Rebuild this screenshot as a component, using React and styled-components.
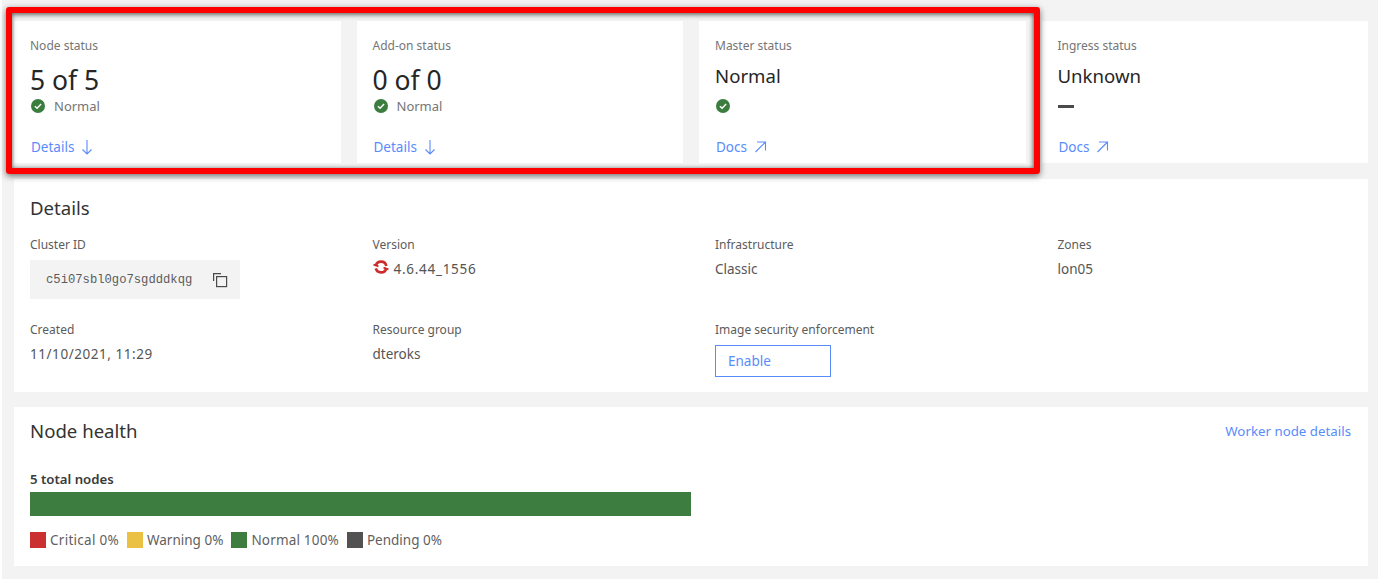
import React from "react";
import styled, { createGlobalStyle } from "styled-components";

const Global = createGlobalStyle`
  html, body { margin: 0; padding: 0; background: #fff; }
  body { font-family: "Noto Sans", "Open Sans", sans-serif; color: #393939; }
`;
const Page = styled.div`
  position: relative;
  width: 1376px;
  height: 579px;
  margin-left: 2px;
  box-sizing: border-box;
  background: #f3f3f3;
  padding: 21px 10px 0 12px;
  display: flex;
  flex-direction: column;
`;
const CardRow = styled.div`
  display: grid;
  grid-template-columns: repeat(4, 1fr);
  gap: 16px;
`;
const Card = styled.div`
  background: #fff;
  height: 142px;
  box-sizing: border-box;
  padding: 16px 16px 6px;
  display: flex;
  flex-direction: column;
`;
const Label = styled.div`
  font-size: 12px;
  line-height: 18px;
  color: ${(p) => p.$color || "#757575"};
  white-space: nowrap;
`;
const Value = styled.div`
  height: 36px;
  margin-top: 7px;
  font-size: ${(p) => (p.$big ? "26.5px" : "18.6px")};
  line-height: ${(p) => (p.$big ? "36px" : "28px")};
  color: #262626;
  white-space: nowrap;
`;
const Status = styled.div`
  display: flex;
  align-items: center;
  height: 16px;
  gap: 8px;
  font-size: 13px;
  color: #757575;
`;
const Dash = styled.span`
  width: 16px;
  height: 3px;
  background: #4a4a4a;
`;
const CardLink = styled.a`
  margin-top: auto;
  height: 20px;
  display: flex;
  align-items: center;
  gap: 5px;
  padding-left: 1px;
  font-size: 13.5px;
  color: #5a8bfb;
`;
const Section = styled.section`
  background: #fff;
  margin-top: ${(p) => p.$top}px;
  height: ${(p) => p.$height}px;
  box-sizing: border-box;
`;
const Heading = styled.h2`
  margin: 0;
  font-size: 18.6px;
  line-height: 28px;
  font-weight: 400;
  color: #333;
`;
const DetailsHead = styled.div`
  padding: 15px 16px 0;
`;
const DetailGrid = styled.div`
  display: grid;
  grid-template-columns: repeat(4, 1fr);
  grid-template-rows: 85px auto;
  column-gap: 16px;
  margin-top: 14px;
`;
const Cell = styled.div`
  padding-left: 16px;
`;
const CellValue = styled.div`
  display: flex;
  align-items: center;
  gap: 5px;
  margin-top: 6px;
  font-size: 13.5px;
  line-height: 18px;
  color: #555;
  letter-spacing: ${(p) => p.$tracking || 0}px;
`;
const CodeBox = styled.div`
  margin-top: 6px;
  width: 210px;
  height: 39px;
  box-sizing: border-box;
  background: #f3f3f3;
  padding: 0 12px 0 16px;
  display: flex;
  align-items: center;
  justify-content: space-between;
  font-family: "Liberation Mono", monospace;
  font-size: 12.2px;
  color: #5c5c5c;
`;
const EnableButton = styled.button`
  display: block;
  margin-top: 6px;
  width: 116px;
  height: 32px;
  box-sizing: border-box;
  border: 1.5px solid #5a8bfb;
  background: #fff;
  padding: 0 0 0 12px;
  text-align: left;
  font-family: inherit;
  font-size: 13.5px;
  color: #5a8bfb;
`;
const HealthHead = styled.div`
  display: flex;
  justify-content: space-between;
  align-items: center;
  padding: 10px 17px 0 16px;
`;
const WorkerLink = styled.a`
  font-size: 13.3px;
  color: #5a8bfb;
`;
const Total = styled.div`
  margin: 25px 16px 0;
  font-size: 13.2px;
  line-height: 18px;
  font-weight: 600;
  color: #3a3a3a;
`;
const Bar = styled.div`
  margin: 4px 16px 0;
  width: 661px;
  height: 24px;
  background: #3d7d40;
`;
const Legend = styled.div`
  display: flex;
  gap: 8px;
  margin: 16px 16px 0;
`;
const LegendItem = styled.div`
  display: flex;
  align-items: center;
  gap: 4px;
  font-size: 13.5px;
  line-height: 16px;
  letter-spacing: ${(p) => p.$tracking}px;
  color: #5f5f5f;
  white-space: nowrap;
`;
const Swatch = styled.span`
  width: 16px;
  height: 16px;
  background: ${(p) => p.$color};
`;
const Highlight = styled.div`
  position: absolute;
  left: 4px;
  top: 7px;
  width: 1034px;
  height: 167px;
  box-sizing: border-box;
  border: 6px solid #fe0000;
  border-radius: 3px;
  box-shadow: 0 2px 6px rgba(0, 0, 0, 0.55), inset 0 2px 5px rgba(0, 0, 0, 0.45), inset -1px 0 4px rgba(0, 0, 0, 0.35);
  pointer-events: none;
`;

const Check = () => (
  <svg width="16" height="16" viewBox="0 0 16 16" style={{ flex: "none" }}>
    <circle cx="8" cy="8" r="7" fill="#3a7d3f" />
    <path d="M4.9 8.2 7.1 10.3 11.1 6" fill="none" stroke="#fff" strokeWidth="1.4" />
  </svg>
);
const ArrowDown = () => (
  <svg width="16" height="16" viewBox="0 0 16 16" fill="none" stroke="#5a8bfb" strokeWidth="1.1">
    <path d="M8 1v14M3.5 10.5 8 15l4.500-4.500" />
  </svg>
);
const ArrowUpRight = () => (
  <svg width="16" height="16" viewBox="0 0 16 16" fill="none" stroke="#5a8bfb" strokeWidth="1.1">
    <path d="M3.500 13 13 3.500M5 3h8.500v8.500" />
  </svg>
);
const Copy = () => (
  <svg width="16" height="16" viewBox="0 0 16 16" fill="none" stroke="#4a4a4a" strokeWidth="1.2">
    <rect x="4.600" y="4.600" width="10" height="10" />
    <path d="M1.600 9V1.600H9" />
  </svg>
);
const OpenShift = () => (
  <svg width="16" height="16" viewBox="0 0 16 16" fill="none" style={{ flex: "none", marginTop: "-4px" }}>
    <circle cx="8" cy="8" r="5.400" stroke="#cb2c2e" strokeWidth="2.600" strokeDasharray="14 3" strokeDashoffset="-1" />
    <path d="M0.500 5.600 5.500 7.400M10.500 8.600 15.500 10.400" stroke="#cb2c2e" strokeWidth="1.800" />
  </svg>
);

const cards = [
  { label: "Node status", value: "5 of 5", big: true, status: <><Check />Normal</>, link: "Details", icon: <ArrowDown /> },
  { label: "Add-on status", value: "0 of 0", big: true, status: <><Check />Normal</>, link: "Details", icon: <ArrowDown /> },
  { label: "Master status", value: "Normal", status: <Check />, link: "Docs", icon: <ArrowUpRight /> },
  { label: "Ingress status", value: "Unknown", status: <Dash />, link: "Docs", icon: <ArrowUpRight /> },
];
const legend = [
  ["Critical 0%", "#cb3030", 0.28],
  ["Warning 0%", "#ebc144", 0],
  ["Normal 100%", "#3d7d40", 0.18],
  ["Pending 0%", "#525252", 0],
];

export default function App() {
  return (
    <Page>
      <Global />
      <CardRow>
        {cards.map((c) => (
          <Card key={c.label}>
            <Label>{c.label}</Label>
            <Value $big={c.big}>{c.value}</Value>
            <Status>{c.status}</Status>
            <CardLink>{c.link}{c.icon}</CardLink>
          </Card>
        ))}
      </CardRow>
      <Section $top={16} $height={213}>
        <DetailsHead><Heading>Details</Heading></DetailsHead>
        <DetailGrid>
          <Cell>
            <Label $color="#5c5c5c">Cluster ID</Label>
            <CodeBox>c5i07sbl0go7sgdddkqg<Copy /></CodeBox>
          </Cell>
          <Cell>
            <Label $color="#5c5c5c">Version</Label>
            <CellValue $tracking={0.72}><OpenShift />4.6.44_1556</CellValue>
          </Cell>
          <Cell>
            <Label $color="#5c5c5c">Infrastructure</Label>
            <CellValue>Classic</CellValue>
          </Cell>
          <Cell>
            <Label $color="#5c5c5c">Zones</Label>
            <CellValue>lon05</CellValue>
          </Cell>
          <Cell>
            <Label $color="#5c5c5c">Created</Label>
            <CellValue $tracking={0.55}>11/10/2021, 11:29</CellValue>
          </Cell>
          <Cell>
            <Label $color="#5c5c5c">Resource group</Label>
            <CellValue>dteroks</CellValue>
          </Cell>
          <Cell>
            <Label $color="#5c5c5c">Image security enforcement</Label>
            <EnableButton>Enable</EnableButton>
          </Cell>
        </DetailGrid>
      </Section>
      <Section $top={15} $height={159}>
        <HealthHead>
          <Heading>Node health</Heading>
          <WorkerLink>Worker node details</WorkerLink>
        </HealthHead>
        <Total>5 total nodes</Total>
        <Bar />
        <Legend>
          {legend.map(([t, c, k]) => (
            <LegendItem key={t} $tracking={k}><Swatch $color={c} />{t}</LegendItem>
          ))}
        </Legend>
      </Section>
      <Highlight />
    </Page>
  );
}
